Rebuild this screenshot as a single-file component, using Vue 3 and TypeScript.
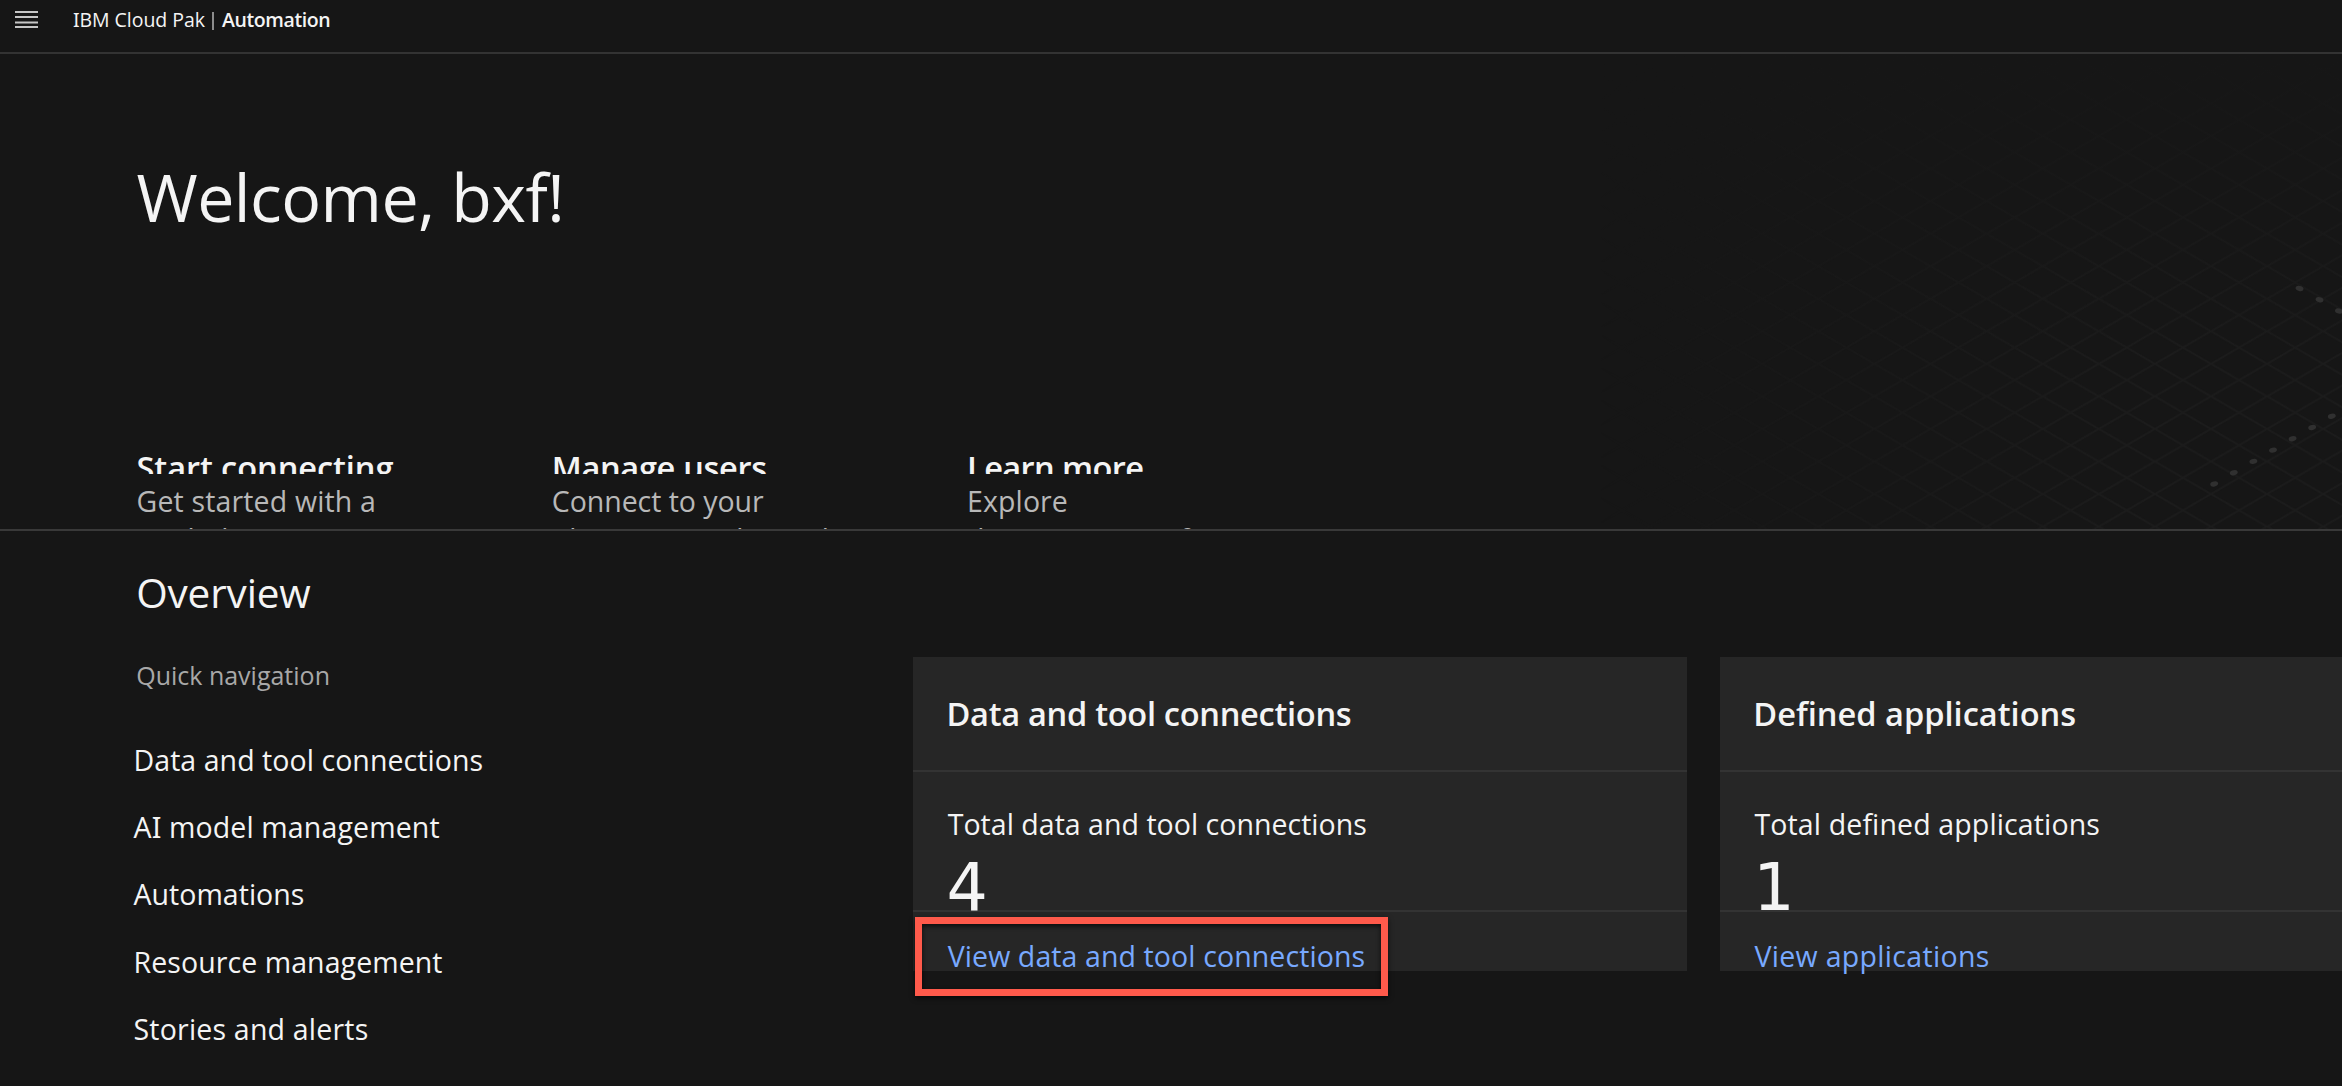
<script setup lang="ts">
interface Topic {
  title: string
  text: string
  titleSpacing: number
  textSpacing: number
}
interface NavItem {
  lead?: string
  serif?: string
  rest: string
  spacing: number
}
interface Tile {
  title: string
  label: string
  count: number
  link: string
  spacing: [number, number, number]
  highlighted?: boolean
}

const topics: Topic[] = [
  { title: 'Start connecting', text: 'Get started with a guided tour', titleSpacing: -0.08, textSpacing: 0.16 },
  { title: 'Manage users', text: 'Connect to your identity provider and', titleSpacing: -0.35, textSpacing: -0.05 },
  { title: 'Learn more', text: 'Explore documentation for', titleSpacing: -0.62, textSpacing: 0.1 },
]

const navItems: NavItem[] = [
  { rest: 'Data and tool connections', spacing: 0.06 },
  { lead: 'A', serif: 'I', rest: ' model management', spacing: 0.13 },
  { rest: 'Automations', spacing: 0.03 },
  { rest: 'Resource management', spacing: 0.08 },
  { rest: 'Stories and alerts', spacing: 0.2 },
]

const tiles: Tile[] = [
  {
    title: 'Data and tool connections',
    label: 'Total data and tool connections',
    count: 4,
    link: 'View data and tool connections',
    spacing: [-0.3, 0.03, 0.1],
    highlighted: true,
  },
  {
    title: 'Defined applications',
    label: 'Total defined applications',
    count: 1,
    link: 'View applications',
    spacing: [0, 0.13, 0.31],
  },
]

// Dotted connectors over the isometric grid, relative to the hero artwork.
const dots = [
  { x: 699.5, y: 234.5, a: 14 },
  { x: 719.5, y: 245.7, a: 14 },
  { x: 739, y: 257, a: 14 },
  ...Array.from({ length: 7 }, (_, i) => ({ x: 614.2 + i * 19.6, y: 430 - i * 11.3, a: -14 })),
]

const px = (n: number) => ({ letterSpacing: `${n}px` })
</script>

<template>
  <div class="page">
    <header class="topbar">
      <svg class="menu" width="23" height="17" viewBox="0 0 23 17" aria-hidden="true">
        <path d="M0 1h23M0 6h23M0 11.5h23M0 16h23" stroke="#c6c6c6" stroke-width="2" fill="none" />
      </svg>
      <div class="brand">
        <span class="suite"><span class="serif-i">I</span>BM Cloud Pak</span>
        <span class="bar"></span>
        <strong>Automation</strong>
      </div>
    </header>

    <section class="hero">
      <svg class="art" width="742" height="475" viewBox="0 0 742 475" aria-hidden="true">
        <defs>
          <pattern id="grid" width="56.1" height="32.55" patternUnits="userSpaceOnUse" x="50" y="16.9">
            <path d="M-5.61 -3.255L61.71 35.805M-5.61 35.805L61.71 -3.255" stroke="#1c1c1c" stroke-width="1.9" fill="none" />
          </pattern>
          <linearGradient id="fadeX">
            <stop offset="0" stop-color="#fff" stop-opacity="0" />
            <stop offset="0.7" stop-color="#fff" />
          </linearGradient>
          <linearGradient id="fadeY" x1="0" y1="0" x2="0" y2="1">
            <stop offset="0" stop-color="#161616" />
            <stop offset="0.65" stop-color="#161616" stop-opacity="0" />
          </linearGradient>
          <mask id="fade"><rect width="742" height="475" fill="url(#fadeX)" /></mask>
        </defs>
        <rect width="742" height="475" fill="url(#grid)" mask="url(#fade)" />
        <rect width="742" height="475" fill="url(#fadeY)" />
        <ellipse
          v-for="(d, i) in dots"
          :key="i"
          :cx="d.x"
          :cy="d.y"
          rx="4"
          ry="2.5"
          fill="#303030"
          :transform="`rotate(${d.a} ${d.x} ${d.y})`"
        />
      </svg>
      <h1>Welcome, bxf!</h1>
      <div class="topics">
        <article v-for="t in topics" :key="t.title" class="topic">
          <h2 :style="px(t.titleSpacing)">{{ t.title }}</h2>
          <p :style="px(t.textSpacing)">{{ t.text }}</p>
        </article>
      </div>
    </section>

    <main class="overview">
      <h2 class="heading">Overview</h2>
      <div class="columns">
        <nav class="quick">
          <h3>Quick navigation</h3>
          <a v-for="n in navItems" :key="n.rest" :style="px(n.spacing)">{{ n.lead }}<span v-if="n.serif" class="serif-i">{{ n.serif }}</span>{{ n.rest }}</a>
        </nav>
        <div class="tiles">
          <article v-for="t in tiles" :key="t.title" class="tile">
            <h3 :style="px(t.spacing[0])">{{ t.title }}</h3>
            <div class="body">
              <div class="label" :style="px(t.spacing[1])">{{ t.label }}</div>
              <div class="count">{{ t.count }}</div>
            </div>
            <footer>
              <a :style="px(t.spacing[2])">{{ t.link }}</a>
              <span v-if="t.highlighted" class="highlight"></span>
            </footer>
          </article>
        </div>
      </div>
    </main>
  </div>
</template>

<style>
body {
  background: #161616;
}
</style>

<style scoped>
.page {
  height: 1086px;
  overflow: hidden;
  background: #161616;
  color: #f4f4f4;
  font-family: "Open Sans", "Noto Sans", sans-serif;
}
h1, h2, h3, p {
  margin: 0;
  font-weight: 400;
}
.serif-i {
  font-family: "Noto Sans", sans-serif;
  line-height: 1;
}
.topbar {
  box-sizing: border-box;
  height: 54px;
  padding-left: 15px;
  border-bottom: 2px solid #333;
  display: flex;
  align-items: flex-start;
}
.menu {
  margin-top: 11px;
}
.brand {
  display: flex;
  margin: 6px 0 0 35px;
  font-size: 19.5px;
  line-height: 28px;
  white-space: nowrap;
}
.suite {
  width: 139.5px;
  letter-spacing: -0.05px;
}
.bar {
  width: 2px;
  height: 18px;
  margin: 6px 8px 0 -0.5px;
  background: #8d8d8d;
}
.brand strong {
  font-weight: 600;
  letter-spacing: -0.4px;
}
.hero {
  position: relative;
  box-sizing: border-box;
  height: 477px;
  padding: 102.4px 0 0 136.5px;
  border-bottom: 2px solid #393939;
  overflow: hidden;
}
.art {
  position: absolute;
  right: 0;
  top: 0;
}
h1 {
  position: relative;
  font-size: 66.3px;
  line-height: 80px;
  letter-spacing: -0.55px;
}
.topics {
  position: relative;
  display: flex;
  margin-top: 211px;
}
.topic {
  width: 415.3px;
}
.topic h2 {
  height: 27px;
  overflow: hidden;
  font-size: 32.6px;
  font-weight: 600;
  line-height: 42px;
}
.topic p {
  width: 290px;
  margin-top: 7.6px;
  color: #b8b8b8;
  font-size: 28.5px;
  line-height: 38.4px;
}
.overview {
  padding: 36.6px 0 0 136.2px;
}
.heading {
  font-size: 40.5px;
  line-height: 50px;
  letter-spacing: -0.15px;
}
.columns {
  display: flex;
  margin-top: 39px;
}
.quick {
  width: 777px;
  flex: none;
  display: flex;
  flex-direction: column;
}
.quick h3 {
  margin: 1.4px 0 34px;
  color: #a8a8a8;
  font-size: 25px;
  line-height: 34px;
}
.quick a {
  height: 67.25px;
  margin-left: -2.7px;
  font-size: 28.5px;
  line-height: 68px;
}
.tiles {
  display: flex;
  gap: 33.3px;
}
.tile {
  width: 773.5px;
  height: 314.5px;
  flex: none;
  background: #262626;
}
.tile h3 {
  box-sizing: border-box;
  height: 115.4px;
  padding: 37.1px 0 0 33.3px;
  border-bottom: 2px solid #333;
  font-size: 32.6px;
  font-weight: 600;
  line-height: 40px;
}
.body {
  box-sizing: border-box;
  height: 140px;
  padding: 32px 0 0 34.5px;
  border-bottom: 2px solid #333;
}
.label {
  font-size: 28.5px;
  line-height: 40px;
}
.count {
  font-family: "DejaVu Sans", sans-serif;
  font-size: 65px;
  line-height: 70px;
  margin: 9px 0 0 -1.3px;
}
footer {
  position: relative;
  padding: 23.6px 0 0 34.5px;
}
footer a {
  color: #78a9ff;
  font-size: 28.5px;
  line-height: 40px;
}
.highlight {
  position: absolute;
  box-sizing: border-box;
  left: 1.8px;
  top: 5px;
  width: 473px;
  height: 79.5px;
  border: 7px solid #ff5a4b;
  box-shadow: 0 2px 5px rgba(0, 0, 0, 0.7), inset 0 2px 5px rgba(0, 0, 0, 0.7);
}
</style>
